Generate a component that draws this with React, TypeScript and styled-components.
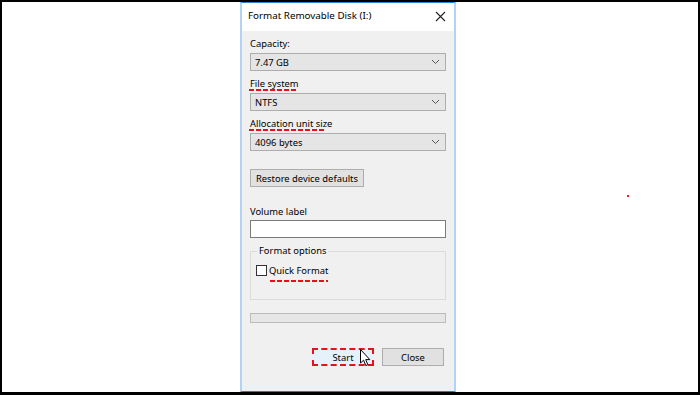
import React from "react";
import styled, { createGlobalStyle } from "styled-components";

const GlobalStyle = createGlobalStyle`
  html, body {
    margin: 0;
    padding: 0;
    background: #ffffff;
  }
  * {
    box-sizing: border-box;
  }
`;

const Frame = styled.div`
  position: relative;
  width: 700px;
  height: 395px;
  border: solid #000;
  border-width: 2px 2px 3px 2px;
  background: #ffffff;
  font-family: "Noto Sans", "Liberation Sans", sans-serif;
  font-size: 9.4px;
  color: #000;
`;

const Dialog = styled.div`
  margin-left: 238px;
  width: 216px;
  height: 390px;
  display: flex;
  flex-direction: column;
  border-left: 2px solid #b3d3f2;
  border-right: 2px solid #b3d3f2;
  border-top: 1px solid #2b84d6;
  border-bottom: 1px solid #2b78d0;
  background: #f0f0f0;
`;

const TitleBar = styled.div`
  height: 28px;
  display: flex;
  align-items: flex-start;
  justify-content: space-between;
  padding: 6px 8px 0 6px;
  background: #ffffff;
  font-size: 9.8px;
  line-height: 14px;
`;

const CloseWrap = styled.div`
  height: 14px;
  display: flex;
  align-items: center;
`;

const Body = styled.div`
  flex: 1;
  display: flex;
  flex-direction: column;
  padding: 7px 8px 0 8px;
`;

const Label = styled.div<{ $gap?: number }>`
  position: relative;
  height: 12px;
  line-height: 12px;
  margin-top: ${({ $gap }) => $gap ?? 0}px;
`;

const Marked = styled.span<{ $w: number; $drop?: number; $shift?: number }>`
  position: relative;
  &::after {
    content: "";
    position: absolute;
    left: ${({ $shift }) => $shift ?? -1}px;
    top: ${({ $drop }) => $drop ?? 12}px;
    width: ${({ $w }) => $w}px;
    height: 2px;
    background: repeating-linear-gradient(
      90deg,
      #e8101a 0 5px,
      transparent 5px 7px
    );
  }
`;

const Select = styled.div<{ $gap: number }>`
  margin-top: ${({ $gap }) => $gap}px;
  height: 18px;
  display: flex;
  align-items: center;
  justify-content: space-between;
  padding: 0 5px 0 4px;
  background: #e5e5e5;
  border: 1px solid #adadad;
`;

const Button = styled.div<{ $primary?: boolean }>`
  height: 18px;
  width: 62px;
  display: flex;
  align-items: center;
  justify-content: center;
  background: ${({ $primary }) => ($primary ? "#e5f1fb" : "#e1e1e1")};
  border: ${({ $primary }) =>
    $primary ? "2px dashed #e8101a" : "1px solid #adadad"};
`;

const RestoreButton = styled(Button)`
  margin-top: 18px;
  width: 114px;
`;

const TextInput = styled.div`
  margin-top: 2px;
  height: 18px;
  background: #ffffff;
  border: 1px solid #7a7a7a;
`;

const GroupBox = styled.fieldset`
  margin: 7px 0 0 0;
  height: 55px;
  padding: 1px 6px 0 5px;
  border: 1px solid #dcdcdc;
  min-width: 0;
`;

const Legend = styled.legend`
  padding: 0 2px;
  margin-left: 1px;
  line-height: 12px;
`;

const CheckRow = styled.div`
  display: flex;
  align-items: center;
  gap: 2px;
  margin-top: 6px;
  height: 12px;
`;

const CheckBox = styled.div`
  width: 11px;
  height: 11px;
  border: 1px solid #333;
  background: #ffffff;
`;

const Progress = styled.div`
  margin-top: 13px;
  height: 10px;
  background: #e6e6e6;
  border: 1px solid #bcbcbc;
`;

const ButtonRow = styled.div`
  margin-top: 25px;
  display: flex;
  justify-content: flex-end;
  gap: 8px;
  padding-right: 2px;
  position: relative;
`;

const Cursor = styled.svg`
  position: absolute;
  left: 110px;
  top: 1px;
`;

const Dot = styled.div`
  position: absolute;
  left: 625px;
  top: 193px;
  width: 2px;
  height: 2px;
  background: #f02020;
`;

const Chevron = () => (
  <svg width="9" height="6" viewBox="0 0 9 6">
    <path d="M1 1 L4.5 4.5 L8 1" fill="none" stroke="#555" strokeWidth="1" />
  </svg>
);

const CloseIcon = () => (
  <svg width="11" height="11" viewBox="0 0 11 11">
    <path d="M1 1 L10 10 M10 1 L1 10" stroke="#222" strokeWidth="1.1" />
  </svg>
);

export default function App() {
  return (
    <Frame>
      <GlobalStyle />
      <Dialog>
        <TitleBar>
          <span>Format Removable Disk (I:)</span>
          <CloseWrap>
            <CloseIcon />
          </CloseWrap>
        </TitleBar>
        <Body>
          <Label>Capacity:</Label>
          <Select $gap={3}>
            <span>7.47 GB</span>
            <Chevron />
          </Select>
          <Label $gap={7}>
            <Marked $w={48}>File system</Marked>
          </Label>
          <Select $gap={3}>
            <span>NTFS</span>
            <Chevron />
          </Select>
          <Label $gap={7}>
            <Marked $w={77}>Allocation unit size</Marked>
          </Label>
          <Select $gap={3}>
            <span>4096 bytes</span>
            <Chevron />
          </Select>
          <RestoreButton>Restore device defaults</RestoreButton>
          <Label $gap={19}>Volume label</Label>
          <TextInput />
          <GroupBox>
            <Legend>Format options</Legend>
            <CheckRow>
              <CheckBox />
              <Marked $w={58} $drop={16} $shift={1}>
                Quick Format
              </Marked>
            </CheckRow>
          </GroupBox>
          <Progress />
          <ButtonRow>
            <Button $primary>Start</Button>
            <Button>Close</Button>
            <Cursor width="11" height="18" viewBox="0 0 11 18">
              <path
                d="M0.5 0.5 L0.5 14 L3.6 11.2 L5.8 16.6 L7.8 15.7 L5.7 10.6 L9.8 10.6 Z"
                fill="#ffffff"
                stroke="#000"
                strokeWidth="1"
                strokeLinejoin="round"
              />
            </Cursor>
          </ButtonRow>
        </Body>
      </Dialog>
      <Dot />
    </Frame>
  );
}
